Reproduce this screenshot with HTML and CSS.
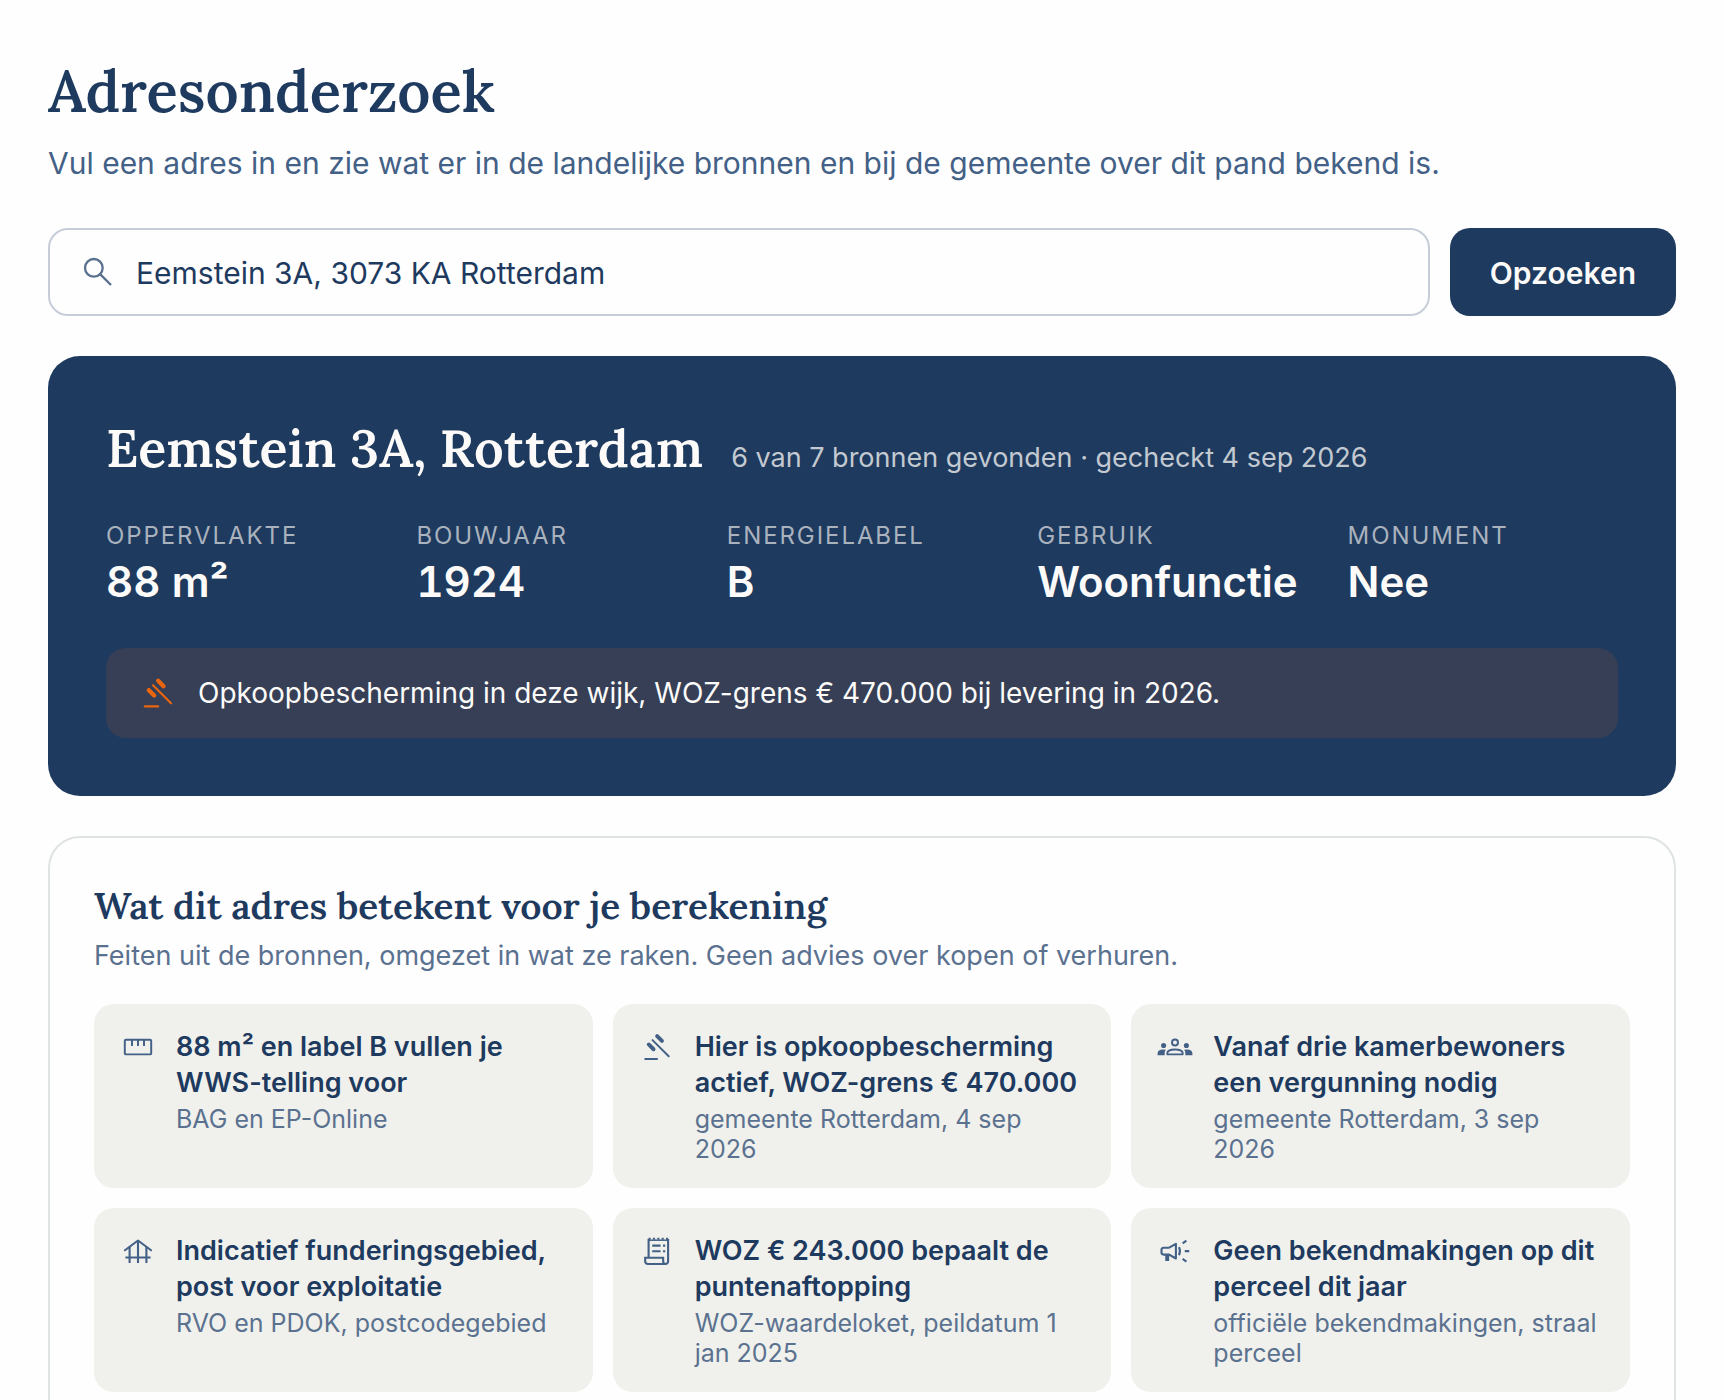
FILE: index.html
```html
<!DOCTYPE html>
<html lang="nl">

<head>
    <meta charset="UTF-8">
    <meta name="viewport" content="width=device-width, initial-scale=1.0">
    <title>Adresonderzoek</title>
    <link rel="stylesheet" href="styles.css">
</head>

<body>
    <!-- Shared icon shapes -->
    <svg class="icon-defs" aria-hidden="true">
        <symbol id="icon-gavel" viewBox="0 0 24 24">
            <path d="M4.2 20H12" fill="none" stroke="currentColor" stroke-width="1.4" stroke-linecap="round" />
            <path d="M9 7.4L19.8 18.2" fill="none" stroke="currentColor" stroke-width="1.3" stroke-linecap="round" />
            <path d="M11.5 4.7L14.7 7.9M5.9 10.3L9.1 13.5" transform="translate(.6 0)" fill="none" stroke="currentColor" stroke-width="2.6" stroke-linecap="round" />
        </symbol>
    </svg>

    <main class="page">
        <header class="page-header">
            <h1>Adresonderzoek</h1>
            <p>Vul een adres in en zie wat er in de landelijke bronnen en bij de gemeente over dit pand bekend is.</p>
        </header>

        <!-- Search -->
        <form class="search">
            <label class="search-field">
                <svg class="icon-large" viewBox="0 0 24 24" fill="none" stroke="currentColor" stroke-width="1.4" aria-hidden="true">
                    <circle cx="9.5" cy="9.5" r="5.3" />
                    <path d="M13.4 13.4L19.8 19.8" />
                </svg>
                <input type="text" aria-label="Adres" value="Eemstein 3A, 3073 KA Rotterdam">
            </label>
            <button type="submit">Opzoeken</button>
        </form>

        <!-- Address summary -->
        <section class="summary">
            <div class="summary-head">
                <h2>Eemstein 3A, Rotterdam</h2>
                <p>6 van 7 bronnen gevonden · gecheckt 4 sep 2026</p>
            </div>
            <dl class="stats">
                <div>
                    <dt>Oppervlakte</dt>
                    <dd>88 m²</dd>
                </div>
                <div>
                    <dt>Bouwjaar</dt>
                    <dd>1924</dd>
                </div>
                <div>
                    <dt>Energielabel</dt>
                    <dd>B</dd>
                </div>
                <div>
                    <dt>Gebruik</dt>
                    <dd>Woonfunctie</dd>
                </div>
                <div>
                    <dt>Monument</dt>
                    <dd>Nee</dd>
                </div>
            </dl>
            <div class="notice">
                <svg class="icon-large" aria-hidden="true"><use href="#icon-gavel" /></svg>
                <p>Opkoopbescherming in deze wijk, WOZ-grens € 470.000 bij levering in 2026.</p>
            </div>
        </section>

        <!-- Findings -->
        <section class="findings">
            <h2>Wat dit adres betekent voor je berekening</h2>
            <p class="intro">Feiten uit de bronnen, omgezet in wat ze raken. Geen advies over kopen of verhuren.</p>
            <div class="tiles">
                <article class="tile">
                    <svg class="icon" viewBox="0 0 24 24" fill="none" stroke="currentColor" stroke-width="1.3" aria-hidden="true">
                        <rect x="3.2" y="7.1" width="17.6" height="9.8" rx=".8" />
                        <path d="M8 7v4.3M12 7v4.3M16 7v4.3" />
                    </svg>
                    <div>
                        <h3>88 m² en label B vullen je WWS-telling voor</h3>
                        <p>BAG en EP-Online</p>
                    </div>
                </article>
                <article class="tile">
                    <svg class="icon" aria-hidden="true"><use href="#icon-gavel" /></svg>
                    <div>
                        <h3>Hier is opkoopbescherming actief, WOZ-grens € 470.000</h3>
                        <p>gemeente Rotterdam, 4 sep 2026</p>
                    </div>
                </article>
                <article class="tile">
                    <svg class="icon" viewBox="0 0 24 24" aria-hidden="true">
                        <g fill="none" stroke="currentColor" stroke-width="1.3">
                            <circle cx="12" cy="9" r="2" />
                            <path d="M6.9 16.9V16Q7 13.6 12 13.6T17.1 16V16.9Z" stroke-linejoin="round" />
                        </g>
                        <g fill="currentColor">
                            <circle cx="4.4" cy="11" r="1.7" />
                            <circle cx="19.6" cy="11" r="1.7" />
                            <path d="M.4 17.5V16.2Q.5 13.6 4 13.6Q5 13.6 5.9 13.8Q5.1 14.8 5.1 16V17.5Z" />
                            <path d="M23.6 17.5V16.2Q23.5 13.6 20 13.6Q19 13.6 18.1 13.8Q18.9 14.8 18.9 16V17.5Z" />
                        </g>
                    </svg>
                    <div>
                        <h3>Vanaf drie kamerbewoners een vergunning nodig</h3>
                        <p>gemeente Rotterdam, 3 sep 2026</p>
                    </div>
                </article>
                <article class="tile">
                    <svg class="icon" viewBox="0 0 24 24" fill="none" stroke="currentColor" stroke-width="1.4" aria-hidden="true">
                        <path d="M3.3 11.5L12 5L20.7 11.5" stroke-linecap="round" stroke-linejoin="round" />
                        <path d="M6.4 9.2V20M12 5V20M17.6 9.2V20M3.6 16.3H20.4" />
                    </svg>
                    <div>
                        <h3>Indicatief funderingsgebied, post voor exploitatie</h3>
                        <p>RVO en PDOK, postcodegebied</p>
                    </div>
                </article>
                <article class="tile">
                    <svg class="icon" viewBox="0 0 24 24" fill="none" stroke="currentColor" stroke-width="1.4" aria-hidden="true">
                        <path d="M6.4 16.4V3.9M19.4 4V18.8Q19.3 20.6 17.6 20.7H6Q4.2 20.6 4.1 18.8V16.5H16.1V19Q16.2 20.5 17.6 20.7" />
                        <path d="M6.4 4.8H19.4" stroke-width="1" />
                        <path d="M6.4 3.8H19.4" stroke-dasharray="1.4 1.5" />
                        <path d="M8.8 8.4H14.4M8.8 12.2H14.4M16 8.4H17.5M16 12.2H17.5" />
                    </svg>
                    <div>
                        <h3>WOZ € 243.000 bepaalt de puntenaftopping</h3>
                        <p>WOZ-waardeloket, peildatum 1 jan 2025</p>
                    </div>
                </article>
                <article class="tile">
                    <svg class="icon" viewBox="0 0 24 24" fill="none" stroke="currentColor" stroke-width="1.4" aria-hidden="true">
                        <path d="M6.2 18.6V14.4H4.4Q3 14.3 3 13V11.2Q3 9.9 4.4 9.8H8.1L12.6 7.2V17L8.1 14.4H6.2M7.4 18.6V14.4" stroke-linejoin="round" />
                        <path d="M14.7 9.4Q15.9 12.1 14.7 14.8M18.5 12.1H21.5M17.1 6.9L19.6 5.1M17.1 17.3L19.6 19.1" />
                    </svg>
                    <div>
                        <h3>Geen bekendmakingen op dit perceel dit jaar</h3>
                        <p>officiële bekendmakingen, straal perceel</p>
                    </div>
                </article>
            </div>
        </section>
    </main>
</body>

</html>
```

FILE: styles.css
```css
* {
    box-sizing: border-box;
}

body {
    font-family: Inter, "Liberation Sans", sans-serif;
    margin: 0;
    background-color: #fefefe;
    color: #1e3a5f; /* Navy */
}

h1, h2, h3, p, dl, dd {
    margin: 0;
}

h1, h2 {
    font-family: Lora, "Liberation Serif", serif;
    font-weight: 600;
}

.page {
    padding: 55px 48px 48px;
}

.icon-defs {
    position: absolute;
    width: 0;
    height: 0;
}

.icon {
    flex: none;
    width: 36px;
    height: 36px;
    color: #436086;
}

.icon-large {
    flex: none;
    width: 40px;
    height: 40px;
}

/* Page header */
.page-header h1 {
    font-size: 58px;
    line-height: 72px;
}

.page-header p {
    margin-top: 16px;
    font-size: 30px;
    line-height: 40px;
    color: #436086;
}

/* Search */
.search {
    display: flex;
    gap: 20px;
    margin-top: 45px;
}

.search-field {
    display: flex;
    align-items: center;
    flex: 1;
    gap: 18px;
    height: 88px;
    padding: 0 28px;
    border: 2px solid #c7cdd8;
    border-radius: 20px;
    color: #5b7190;
    cursor: text;
}

.search input {
    flex: 1;
    min-width: 0;
    padding: 2px 0 0;
    border: none;
    outline: none;
    background: none;
    color: #1e3a5f;
    font: inherit;
    font-size: 30px;
}

.search button {
    padding: 2px 40px 0;
    border: none;
    border-radius: 20px;
    background-color: #1e3a5f;
    color: #fcfbf9;
    font: inherit;
    font-size: 30px;
    font-weight: 600;
    cursor: pointer;
}

/* Address summary */
.summary {
    margin-top: 40px;
    padding: 58px;
    border-radius: 32px;
    background-color: #1e3a5f;
    color: #fcfbf9;
}

.summary-head {
    display: flex;
    flex-wrap: wrap;
    align-items: baseline;
    column-gap: 28px;
}

.summary-head h2 {
    font-size: 52px;
    line-height: 68px;
}

.summary-head p {
    font-size: 27px;
    line-height: 36px;
    color: #c3c9d0;
}

.stats {
    display: grid;
    grid-template-columns: repeat(5, 1fr);
    gap: 40px;
    margin-top: 38px;
}

.stats dt {
    font-size: 24px;
    line-height: 32px;
    letter-spacing: 0.08em;
    text-transform: uppercase;
    color: #a9b2bd;
}

.stats dd {
    margin-top: 2px;
    font-size: 42px;
    line-height: 56px;
    font-weight: 600;
    font-variant-numeric: tabular-nums;
}

.notice {
    display: flex;
    align-items: center;
    gap: 20px;
    margin-top: 38px;
    padding: 25px 32px;
    border-radius: 20px;
    background-color: #363f56;
    color: #ea650d;
}

.notice p {
    font-size: 28px;
    line-height: 40px;
    color: #fcfbf9;
}

/* Findings */
.findings {
    margin-top: 40px;
    padding: 44px;
    border: 2px solid #dfe3e4;
    border-radius: 32px;
}

.findings h2 {
    font-size: 37px;
    line-height: 48px;
}

.findings .intro {
    margin-top: 8px;
    font-size: 27px;
    line-height: 36px;
    color: #5b7190;
}

.tiles {
    display: grid;
    grid-template-columns: repeat(3, 1fr);
    gap: 20px;
    margin-top: 30px;
}

.tile {
    display: flex;
    gap: 20px;
    padding: 25px 26px 24px;
    border-radius: 20px;
    background-color: #f0f1ec;
}

.tile h3 {
    font-size: 27px;
    line-height: 36px;
    font-weight: 600;
}

.tile p {
    margin-top: 3px;
    font-size: 25px;
    line-height: 30px;
    color: #5b7190;
}

@media (max-width: 1100px) {
    .stats, .tiles {
        grid-template-columns: repeat(2, 1fr);
    }
}
```
